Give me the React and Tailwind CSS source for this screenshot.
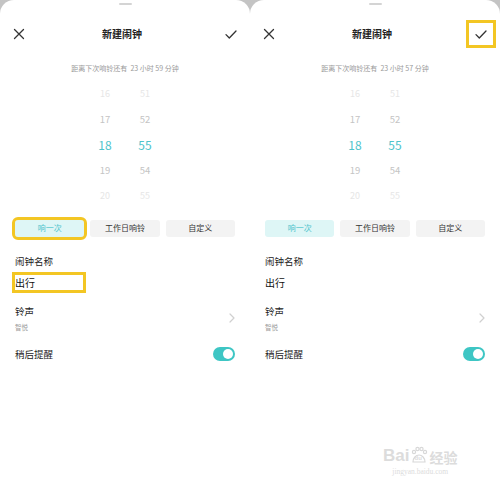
import React from 'react'

const FONT = { fontFamily: '"Noto Sans CJK SC", "Noto Sans", sans-serif' }

const hours = [
  { h: '16', m: '51', tone: 'far' },
  { h: '17', m: '52', tone: 'near' },
  { h: '18', m: '55', tone: 'active' },
  { h: '19', m: '54', tone: 'near' },
  { h: '20', m: '55', tone: 'far' },
]

const toneClass = {
  far: 'text-[#e6e6e6] text-[9px]',
  near: 'text-[#c4c4c4] text-[9.5px]',
  active: 'text-[#4fc4cc] text-[12px]',
}

function CloseIcon() {
  return (
    <svg width="12" height="12" viewBox="0 0 12 12" fill="none" stroke="#333" strokeWidth="1.3" strokeLinecap="round">
      <path d="M1.5 1.5l9 9M10.5 1.5l-9 9" />
    </svg>
  )
}

function CheckIcon() {
  return (
    <svg width="12" height="9" viewBox="0 0 12 9" fill="none" stroke="#333" strokeWidth="1.3" strokeLinecap="round" strokeLinejoin="round">
      <path d="M1 4.6l3.3 3.4L11 1" />
    </svg>
  )
}

function Panel({ remain, markLeft }) {
  return (
    <div className="w-[250px] h-[500px] bg-white rounded-t-[14px] flex flex-col" style={FONT}>
      {/* drag handle */}
      <div className="mt-[3px] mx-auto h-[2px] w-[13px] rounded-full bg-[#d4d4d4]" />

      {/* header */}
      <div className="mt-[20px] h-[18px] px-[13px] flex items-center justify-between">
        <div className="w-[12px] flex justify-center"><CloseIcon /></div>
        <div className="text-[10px] font-bold text-[#222] leading-none">新建闹钟</div>
        <div
          className={
            'w-[24px] h-[22px] flex items-center justify-center ' +
            (markLeft ? 'mr-[-6px]' : 'mr-[-6px] outline-[3px] outline-solid outline-[#f3c623] bg-white')
          }
        >
          <CheckIcon />
        </div>
      </div>

      {/* remaining time */}
      <div className="mt-[20px] text-center text-[7px] leading-[10px] text-[#9a9a9a]">
        距离下次响铃还有&nbsp; {remain}
      </div>

      {/* time picker */}
      <div className="mt-[8px] flex justify-center gap-[20px]">
        <div className="flex flex-col w-[20px]">
          {hours.map((r) => (
            <div key={'h' + r.h} className={'h-[25.5px] flex items-center justify-center ' + toneClass[r.tone]}>
              {r.h}
            </div>
          ))}
        </div>
        <div className="flex flex-col w-[20px]">
          {hours.map((r, i) => (
            <div key={'m' + i} className={'h-[25.5px] flex items-center justify-center ' + toneClass[r.tone]}>
              {r.m}
            </div>
          ))}
        </div>
      </div>

      {/* repeat options */}
      <div className="mt-[11px] px-[15px] grid grid-cols-3 gap-[6px]">
        <div
          className={
            'h-[17px] rounded-[3px] bg-[#def6f6] text-[#4fc4cc] text-[8px] flex items-center justify-center ' +
            (markLeft ? 'outline-[3px] outline-solid outline-[#f3c623]' : '')
          }
        >
          响一次
        </div>
        <div className="h-[17px] rounded-[3px] bg-[#f3f3f3] text-[#333] text-[8px] flex items-center justify-center">工作日响铃</div>
        <div className="h-[17px] rounded-[3px] bg-[#f3f3f3] text-[#333] text-[8px] flex items-center justify-center">自定义</div>
      </div>

      {/* name */}
      <div className="px-[15px]">
        <div className="mt-[17px] text-[9.5px] leading-[14px] text-[#222]">闹钟名称</div>
        <div
          className={
            'mt-[7px] w-[68px] text-[10px] leading-[15px] text-[#111] ' +
            (markLeft ? 'outline-[3px] outline-solid outline-[#f3c623]' : '')
          }
        >
          出行
        </div>
      </div>

      {/* ringtone */}
      <div className="mt-[14px] px-[15px] flex items-center justify-between">
        <div>
          <div className="text-[9.5px] leading-[14px] text-[#222]">铃声</div>
          <div className="mt-[5px] text-[6.5px] leading-[9px] text-[#9a9a9a]">智悦</div>
        </div>
        <svg width="6" height="10" viewBox="0 0 6 10" fill="none" stroke="#d0d0d0" strokeWidth="1.2" strokeLinecap="round" strokeLinejoin="round">
          <path d="M1 1l4 4-4 4" />
        </svg>
      </div>

      {/* snooze */}
      <div className="mt-[15px] px-[15px] flex items-center justify-between">
        <div className="text-[9.5px] leading-[14px] text-[#222]">稍后提醒</div>
        <div className="w-[22px] h-[14px] rounded-full bg-[#3ec6c4] flex items-center justify-end pr-[2px]">
          <div className="w-[10px] h-[10px] rounded-full bg-white" />
        </div>
      </div>
    </div>
  )
}

function Watermark() {
  return (
    <div className="absolute left-[383px] top-[446px] flex flex-col items-center text-[#dcdcdc]" style={FONT}>
      <div className="flex items-end gap-[1px]">
        <span className="text-[17px] leading-none font-bold" style={{ fontFamily: '"Liberation Sans", sans-serif' }}>Bai</span>
        <div className="relative w-[18px] h-[18px]">
          <svg width="18" height="18" viewBox="0 0 18 18" fill="none" stroke="#d8d8d8" strokeWidth="1.2">
            <circle cx="4" cy="6" r="1.6" />
            <circle cx="7.5" cy="3" r="1.6" />
            <circle cx="11.5" cy="3" r="1.6" />
            <circle cx="15" cy="6" r="1.6" />
            <path d="M3 16c0-4 3-7 6-7s6 3 6 7z" />
          </svg>
          <span className="absolute left-[4px] top-[9px] text-[6px] leading-none font-bold" style={{ fontFamily: '"Liberation Sans", sans-serif' }}>du</span>
        </div>
        <span className="text-[14px] leading-none font-bold">经验</span>
      </div>
      <div className="mt-[4px] text-[7.5px] leading-none" style={{ fontFamily: '"Liberation Serif", serif' }}>jingyan.baidu.com</div>
    </div>
  )
}

export default function App() {
  return (
    <div className="relative w-[500px] h-[500px] bg-[#c4c4c4] flex overflow-hidden">
      <Panel remain="23 小时 59 分钟" markLeft />
      <Panel remain="23 小时 57 分钟" markLeft={false} />
      <Watermark />
    </div>
  )
}
